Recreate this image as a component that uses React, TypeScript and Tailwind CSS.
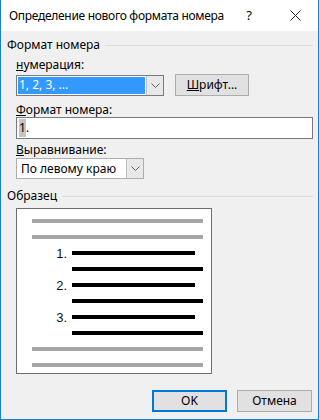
import React from 'react';

const Chevron = () => (
	<svg width="9" height="5" viewBox="0 0 9 5" fill="none">
		<path d="M0.5 0.5 L4.5 4.5 L8.5 0.5" stroke="#606060" strokeWidth="1" />
	</svg>
);

const GroupHeader = ({ title, className }: { title: string; className?: string }) => (
	<div className={`flex h-[16px] items-center pl-[6px] pr-[5px] ${className ?? ''}`}>
		<span>{title}</span>
		<div className="ml-[5px] h-px flex-1 bg-[#dcdcdc]" />
	</div>
);

const Line = ({ tone, w, num }: { tone: 'gray' | 'black'; w: string; num?: string }) => (
	<div className="flex h-[16px] items-center">
		{tone === 'gray' ? (
			<div className={`ml-[15px] h-[4px] bg-[#a5a5a5] ${w}`} />
		) : (
			<>
				<div className="w-[55px] pr-[5px] text-right font-['Liberation_Sans',Arial,sans-serif] text-[13px] leading-none text-[#111]">
					{num ?? ''}
				</div>
				<div className={`h-[4px] bg-black ${w}`} />
			</>
		)}
	</div>
);

export default function App() {
	return (
		<div className="flex h-[420px] w-[319px] flex-col border-x border-b border-[#1a7fd4] bg-[#f0f0f0] font-['Noto_Sans',sans-serif] text-[12px] text-black">
			{/* title bar */}
			<div className="flex h-[31px] items-center bg-white pl-[8px]">
				<span className="text-[12px] tracking-[-0.3px]">Определение нового формата номера</span>
				<span className="ml-auto mr-[38px] text-[13px]">?</span>
				<svg width="11" height="11" viewBox="0 0 11 11" className="mr-[17px]">
					<path d="M0.5 0.5 L10.5 10.5 M10.5 0.5 L0.5 10.5" stroke="#222" strokeWidth="1" />
				</svg>
			</div>

			<GroupHeader title="Формат номера" className="mt-[6px]" />

			<div className="flex flex-col pl-[15px] pr-[5px]">
				<div className="mt-[4px] flex h-[16px] items-center">
					<span>
						<u>н</u>умерация:
					</span>
				</div>
				<div className="mt-[1px] flex items-center">
					<div className="flex h-[21px] w-[148px] border border-[#7a7a7a] bg-white">
						<div className="m-px flex flex-1 items-center bg-[#3399ff] pl-[1px] text-white">1, 2, 3, ...</div>
						<div className="flex w-[17px] items-center justify-center border-l border-[#c0c0c0] bg-[#e8e8e8]">
							<Chevron />
						</div>
					</div>
					<button className="ml-[11px] flex h-[22px] w-[74px] items-center justify-center border border-[#adadad] bg-[#e1e1e1]">
						<span>
							<u>Ш</u>рифт...
						</span>
					</button>
				</div>

				<div className="mt-[6px] flex h-[15px] items-center">
					<span>
						<u>Ф</u>ормат номера:
					</span>
				</div>
				<div className="flex h-[22px] w-[297px] items-center border border-[#7a7a7a] bg-white pl-[2px]">
					<span className="bg-[#c4c4c4]">1</span>
					<span>.</span>
				</div>

				<div className="mt-[3px] flex h-[16px] items-center">
					<span>
						<u>В</u>ыравнивание:
					</span>
				</div>
				<div className="flex h-[21px] w-[128px] border border-[#adadad] bg-white">
					<div className="flex flex-1 items-center pl-[4px]">По левому краю</div>
					<div className="flex w-[17px] items-center justify-center border-l border-[#c0c0c0] bg-[#e8e8e8]">
						<Chevron />
					</div>
				</div>
			</div>

			<GroupHeader title="Образец" className="mt-[9px]" />

			<div className="ml-[15px] mt-[4px] flex h-[166px] w-[196px] flex-col border border-[#6d6d6d] bg-white pt-[4px]">
				<Line tone="gray" w="w-[171px]" />
				<Line tone="gray" w="w-[171px]" />
				<Line tone="black" w="w-[123px]" num="1." />
				<Line tone="black" w="w-[131px]" />
				<Line tone="black" w="w-[123px]" num="2." />
				<Line tone="black" w="w-[131px]" />
				<Line tone="black" w="w-[123px]" num="3." />
				<Line tone="black" w="w-[131px]" />
				<Line tone="gray" w="w-[171px]" />
				<Line tone="gray" w="w-[171px]" />
			</div>

			<div className="mt-[16px] flex justify-end gap-[10px] pr-[6px]">
				<button className="flex h-[22px] w-[75px] items-center justify-center border-2 border-[#0078d7] bg-[#e1e1e1]">
					OK
				</button>
				<button className="flex h-[22px] w-[75px] items-center justify-center border border-[#adadad] bg-[#e1e1e1]">
					Отмена
				</button>
			</div>
		</div>
	);
}
